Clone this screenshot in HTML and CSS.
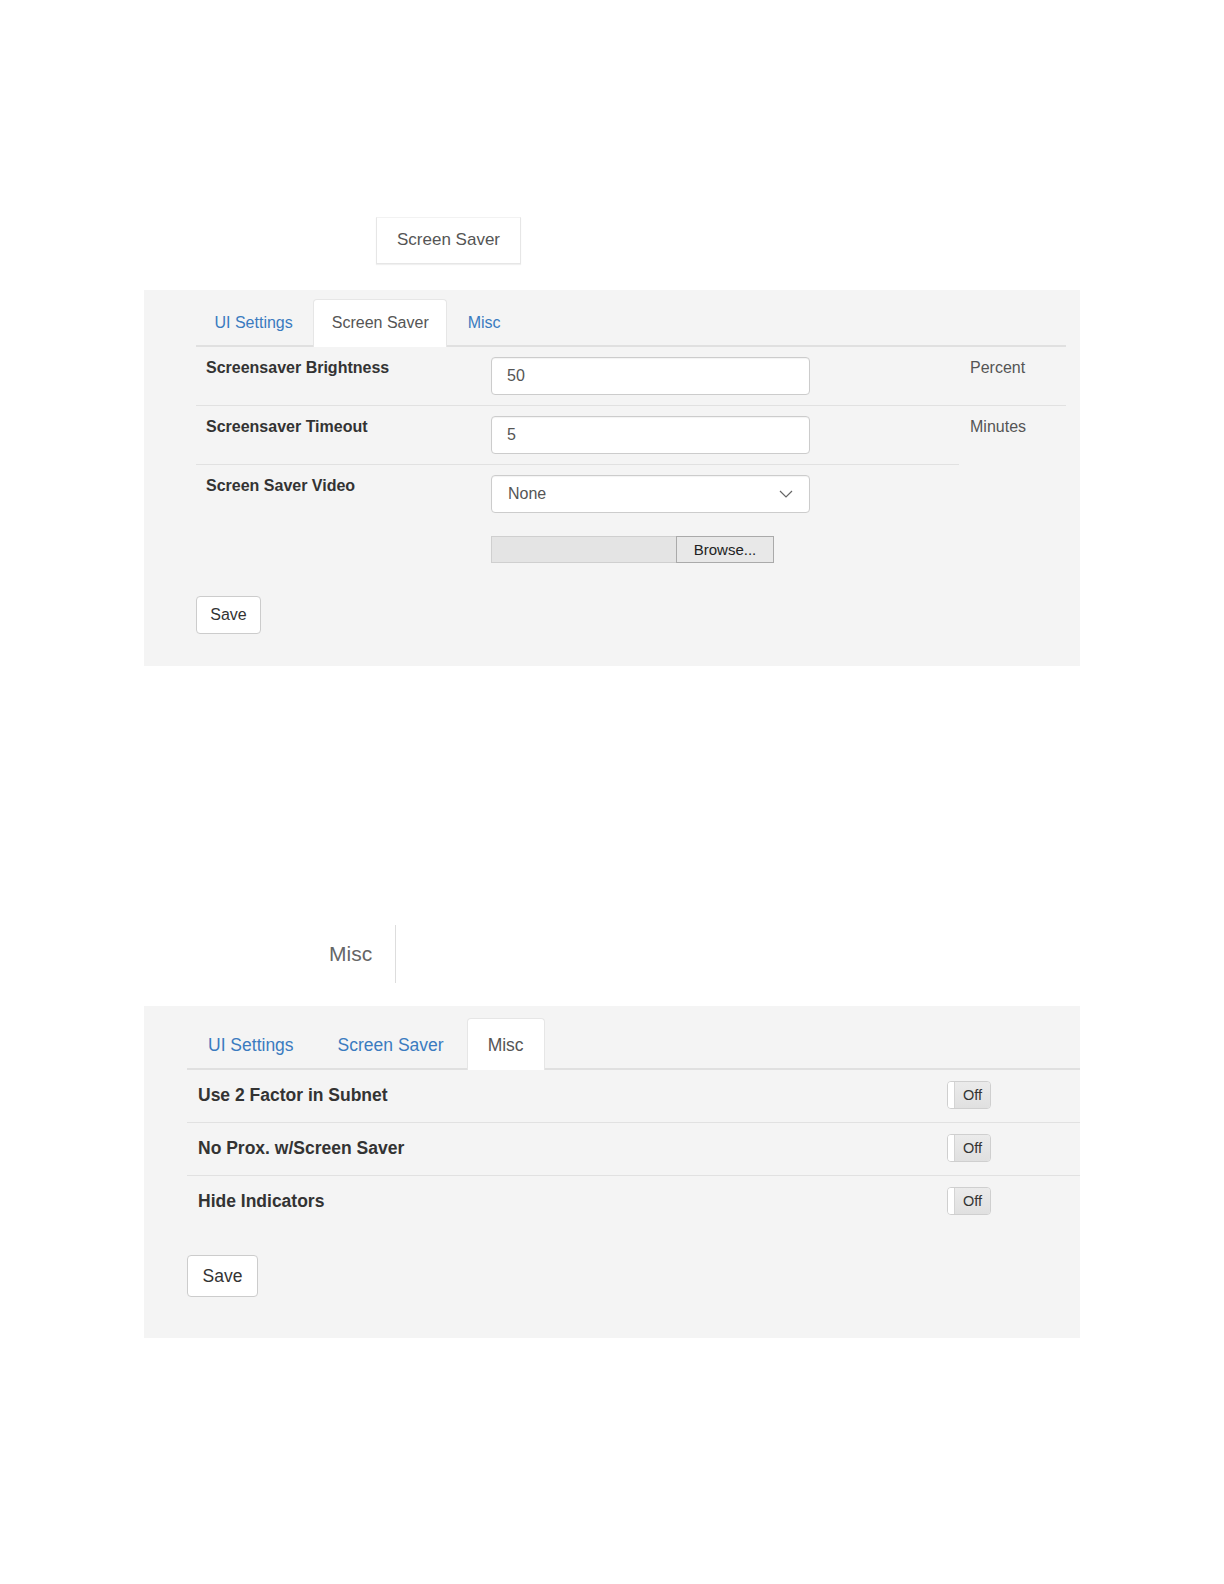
FILE: index.html
```html
<!DOCTYPE html>
<html lang="en">
<head>
  <meta charset="UTF-8">
  <title>Settings - Screen Saver / Misc</title>
  <link rel="stylesheet" href="styles.css">
</head>
<body>
  <section class="shot shot-saver">
    <div class="crop-tab">Screen Saver</div>

    <div class="panel">
      <ul class="tabs">
        <li><a href="#">UI Settings</a></li>
        <li class="active"><a href="#">Screen Saver</a></li>
        <li><a href="#">Misc</a></li>
      </ul>

      <div class="row">
        <label class="row-label">Screensaver Brightness</label>
        <input class="field" type="text" value="50">
        <span class="unit">Percent</span>
      </div>
      <hr class="rule">

      <div class="row">
        <label class="row-label">Screensaver Timeout</label>
        <input class="field" type="text" value="5">
        <span class="unit">Minutes</span>
      </div>
      <hr class="rule rule-short">

      <div class="row">
        <label class="row-label">Screen Saver Video</label>
        <div class="field-stack">
          <div class="field select">
            <span>None</span>
            <svg width="14" height="8" viewBox="0 0 14 8"><path d="M1 1l6 6 6-6" fill="none" stroke="#666" stroke-width="1.2"/></svg>
          </div>
          <div class="file">
            <span class="file-name"></span>
            <span class="file-btn">Browse...</span>
          </div>
        </div>
      </div>

      <button class="btn">Save</button>
    </div>
  </section>

  <section class="shot shot-misc">
    <div class="crop-tab crop-tab-misc">Misc</div>

    <div class="panel panel-misc">
      <ul class="tabs">
        <li><a href="#">UI Settings</a></li>
        <li><a href="#">Screen Saver</a></li>
        <li class="active"><a href="#">Misc</a></li>
      </ul>

      <div class="switch-row">
        <label class="row-label">Use 2 Factor in Subnet</label>
        <div class="toggle"><span class="knob"></span><span class="state">Off</span></div>
      </div>
      <hr class="rule">
      <div class="switch-row">
        <label class="row-label">No Prox. w/Screen Saver</label>
        <div class="toggle"><span class="knob"></span><span class="state">Off</span></div>
      </div>
      <hr class="rule">
      <div class="switch-row">
        <label class="row-label">Hide Indicators</label>
        <div class="toggle"><span class="knob"></span><span class="state">Off</span></div>
      </div>

      <button class="btn">Save</button>
    </div>
  </section>
</body>
</html>
```

FILE: styles.css
```css
body {
  margin: 0;
  background: #fff;
  font-family: "Liberation Sans", Arial, sans-serif;
  color: #333;
}
.shot-saver {
  padding-top: 217px;
}
.shot-misc {
  padding-top: 259px;
}
.crop-tab {
  margin-left: 376px;
  width: 143px;
  height: 45px;
  line-height: 44px;
  text-align: center;
  font-size: 17px;
  color: #555;
  border: 1px solid #e6e6e6;
  border-top-color: #f2f2f2;
  box-shadow: 0 1px 1px rgba(0,0,0,0.06);
}
.crop-tab-misc {
  margin-left: 306px;
  width: auto;
  display: inline-block;
  height: 58px;
  line-height: 58px;
  padding: 0 23px;
  font-size: 21px;
  color: #666;
  border: none;
  border-right: 1px solid #ddd;
  box-shadow: none;
}
.panel {
  margin: 26px 0 0 144px;
  width: 936px;
  box-sizing: border-box;
  background: #f4f4f4;
  padding: 9px 14px 32px 52px;
}
.panel-misc {
  margin-top: 23px;
  padding: 12px 0 41px 43px;
}
.tabs {
  display: flex;
  list-style: none;
  margin: 0;
  padding: 0;
  border-bottom: 2px solid #e0e0e0;
}
.tabs li {
  margin: 0 2px -2px 0;
}
.tabs a {
  display: block;
  height: 48px;
  line-height: 46px;
  padding: 0 17.5px;
  font-size: 16px;
  color: #3a7bc0;
  text-decoration: none;
  border: 1px solid transparent;
  border-bottom: none;
  border-radius: 4px 4px 0 0;
  box-sizing: border-box;
}
.tabs .active a {
  background: #fff;
  color: #555;
  border-color: #e6e6e6;
}
.panel-misc .tabs a {
  height: 52px;
  line-height: 52px;
  padding: 0 20px;
  font-size: 17.5px;
}
.rule {
  margin: 0;
  border: none;
  border-top: 1px solid #e1e1e1;
}
.rule-short {
  margin-right: 107px;
}
.row {
  display: flex;
  align-items: flex-start;
  padding: 10px 0 10px 10px;
}
.row-label {
  width: 285px;
  flex: none;
  padding-top: 1px;
  font-size: 16px;
  line-height: 20px;
  font-weight: bold;
  color: #333;
}
.field {
  width: 319px;
  height: 38px;
  box-sizing: border-box;
  padding: 0 15px;
  font-family: inherit;
  font-size: 16px;
  color: #555;
  background: #fff;
  border: 1px solid #ccc;
  border-radius: 4px;
  box-shadow: inset 0 1px 1px rgba(0,0,0,0.05);
}
.unit {
  margin-left: 160px;
  padding-top: 1px;
  font-size: 16px;
  line-height: 20px;
  color: #555;
}
.field-stack {
  display: flex;
  flex-direction: column;
}
.select {
  display: flex;
  align-items: center;
  justify-content: space-between;
  padding: 0 16px 0 16px;
}
.file {
  display: flex;
  margin-top: 23px;
  height: 27px;
}
.file-name {
  width: 184px;
  background: #e4e4e4;
  border: 1px solid #cfcfcf;
  border-right: none;
}
.file-btn {
  width: 98px;
  box-sizing: border-box;
  text-align: center;
  line-height: 25px;
  font-size: 15px;
  color: #222;
  background: #e8e8e8;
  border: 1px solid #aaa;
}
.btn {
  display: block;
  margin-top: 23px;
  width: 65px;
  height: 38px;
  padding: 0;
  font-family: inherit;
  font-size: 16px;
  color: #333;
  background: #fff;
  border: 1px solid #ccc;
  border-radius: 4px;
}
.switch-row {
  display: flex;
  align-items: center;
  height: 52px;
  padding: 0 89px 3px 11px;
  box-sizing: border-box;
}
.switch-row .row-label {
  width: auto;
  padding-top: 0;
  font-size: 17.5px;
}
.toggle {
  margin-left: auto;
  display: flex;
  width: 44px;
  height: 28px;
  box-sizing: border-box;
  border: 1px solid #cfcfcf;
  border-radius: 4px;
  overflow: hidden;
}
.knob {
  width: 6px;
  background: #fff;
  border-right: 1px solid #d4d4d4;
}
.state {
  flex: 1;
  text-align: center;
  line-height: 26px;
  font-size: 14.5px;
  color: #333;
  background: linear-gradient(#ebebeb, #e0e0e0);
}
.panel-misc .btn {
  margin-top: 27px;
  width: 71px;
  height: 42px;
  font-size: 17.5px;
}
```
